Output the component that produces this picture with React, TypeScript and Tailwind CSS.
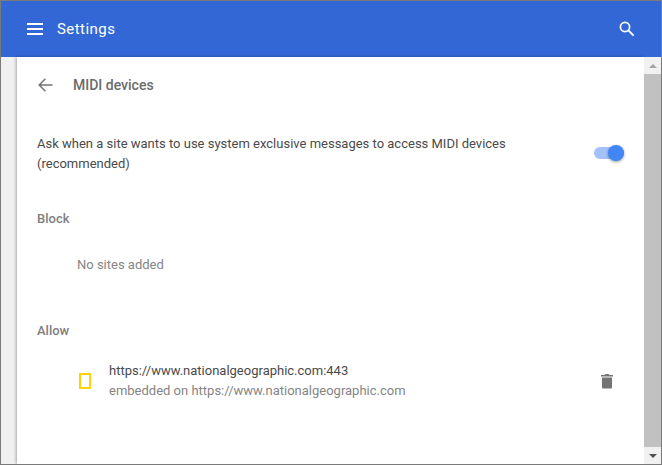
export default function App() {
  return (
    <div className="w-[662px] h-[465px] flex flex-col overflow-hidden border border-[#7a7a7a] bg-[#f1f1f1] font-['Roboto',sans-serif]">
      {/* top bar */}
      <header className="h-[56px] shrink-0 bg-[#3367d6] flex items-center pl-[26px] pr-[25px] text-white">
        <svg width="18" height="14" viewBox="0 0 18 14" fill="white" className="shrink-0">
          <rect x="0" y="1" width="16" height="2" />
          <rect x="0" y="6" width="16" height="2" />
          <rect x="0" y="11" width="16" height="2" />
        </svg>
        <span className="ml-[12px] text-[15px] tracking-[0.45px]">Settings</span>
        <svg width="18" height="18" viewBox="0 0 18 18" fill="none" stroke="white" className="ml-auto">
          <circle cx="7" cy="7" r="4.6" strokeWidth="1.7" />
          <path d="M10.4 10.4 15.6 15.6" strokeWidth="2" />
        </svg>
      </header>

      <div className="flex-1 min-h-0 flex">
        {/* card */}
        <main className="ml-[16px] flex-1 bg-white shadow-[-1px_0_3px_rgba(0,0,0,0.3)]">
          <div className="h-[56px] flex items-center pl-[21px]">
            <svg width="15" height="14" viewBox="0 0 15 14" fill="none" stroke="#737373" strokeWidth="1.5" className="shrink-0">
              <path d="M14.5 7H1.2M7.4 0.8 1.2 7l6.2 6.2" />
            </svg>
            <h1 className="ml-[20px] text-[14px] font-medium text-[#6b6b6b]">MIDI devices</h1>
          </div>

          <div className="mt-[21px] pl-[20px] pr-[20px] flex items-center justify-between">
            <p className="w-[520px] text-[13px] leading-[20px] text-[#4a4a4a]">
              Ask when a site wants to use system exclusive messages to access MIDI devices (recommended)
            </p>
            <div className="relative w-[30px] h-[12px] rounded-full bg-[#a3c1fa] -mt-[3px]">
              <div className="absolute right-0 -top-[2px] w-[16px] h-[16px] rounded-full bg-[#4285f4] shadow-[0_1px_3px_rgba(0,0,0,0.4)]" />
            </div>
          </div>

          <h2 className="mt-[35px] pl-[20px] text-[13px] leading-[20px] font-medium text-[#808080]">Block</h2>
          <p className="mt-[26px] pl-[60px] text-[13px] leading-[20px] text-[#858585]">No sites added</p>

          <h2 className="mt-[46px] pl-[20px] text-[13px] leading-[20px] font-medium text-[#808080]">Allow</h2>

          <div className="mt-[20px] pl-[62px] pr-[30px] flex items-center">
            <div className="w-[12px] h-[16px] border-2 border-[#ffd400] shrink-0" />
            <div className="ml-[18px] flex-1 text-[13px] leading-[20px]">
              <div className="text-[#4a4a4a]">https://www.nationalgeographic.com:443</div>
              <div className="text-[#858585]">embedded on https://www.nationalgeographic.com</div>
            </div>
            <svg width="14" height="16" viewBox="0 0 14 16" fill="#737373" className="shrink-0">
              <path d="M1 2h3.5L5.5 1h3L9.5 2H13V3.5H1z" />
              <path d="M2 4.5h10v10a1 1 0 0 1-1 1H3a1 1 0 0 1-1-1z" />
            </svg>
          </div>
        </main>

        {/* scrollbar */}
        <div className="w-[17px] shrink-0 bg-[#f1f1f1] flex flex-col items-center">
          <div className="h-[17px] flex items-center justify-center">
            <div className="w-0 h-0 border-x-[4px] border-x-transparent border-b-[4px] border-b-[#a3a3a3]" />
          </div>
          <div className="flex-1 w-full bg-[#c1c1c1]" />
          <div className="h-[17px] flex items-center justify-center">
            <div className="w-0 h-0 border-x-[4px] border-x-transparent border-t-[4px] border-t-[#505050]" />
          </div>
        </div>
      </div>
    </div>
  );
}
